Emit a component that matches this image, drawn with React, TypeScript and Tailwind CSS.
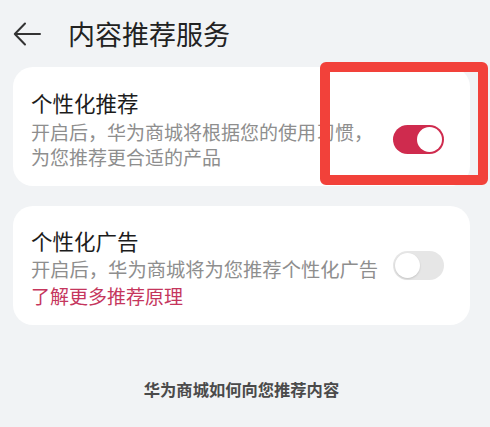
import React from "react";

const font = { fontFamily: '"Noto Sans CJK SC", "Noto Sans", sans-serif' };

function Toggle({ on }: { on: boolean }) {
  return on ? (
    <div className="w-[51px] h-[29px] rounded-full bg-[#cf2b4e] flex items-center justify-end pr-[2px] shrink-0">
      <div className="w-[25px] h-[25px] rounded-full bg-white" />
    </div>
  ) : (
    <div className="w-[51px] h-[29px] rounded-full bg-[#e6e6e6] flex items-center justify-start pl-[2px] shrink-0">
      <div className="w-[25px] h-[25px] rounded-full bg-white shadow-[0_1px_2px_rgba(0,0,0,0.15)]" />
    </div>
  );
}

export default function App() {
  return (
    <div
      className="relative w-[490px] h-[427px] bg-[#f1f3f5] px-[13px] overflow-hidden"
      style={font}
    >
      <div className="h-[67px] flex items-center">
        <svg width="28" height="24" viewBox="0 0 28 24">
          <path d="M12 1.5 L1.8 12 L12 22.5 M1.8 12 H27" fill="none" stroke="#333" strokeWidth="2" strokeLinecap="round" strokeLinejoin="round" />
        </svg>
        <div className="ml-[27px] text-[27px] leading-[34px] text-[#222]">内容推荐服务</div>
      </div>

      <div className="w-[457px] bg-white rounded-[20px] pl-[18px] pr-[26px] pt-[22px] pb-[17px] flex items-center">
        <div className="flex-1">
          <div className="text-[21.5px] leading-[28px] text-[#1c1c1c]">个性化推荐</div>
          <div className="mt-[2px] text-[19px] leading-[25px] text-[#8e8e8e] whitespace-nowrap">
            开启后，华为商城将根据您的使用习惯，
            <br />
            为您推荐更合适的产品
          </div>
        </div>
        <div className="mt-[20px]">
          <Toggle on={true} />
        </div>
      </div>

      <div className="mt-[20px] w-[457px] bg-white rounded-[20px] pl-[18px] pr-[26px] pt-[21px] pb-[16px] flex items-center">
        <div className="flex-1">
          <div className="text-[21.5px] leading-[28px] text-[#1c1c1c]">个性化广告</div>
          <div className="mt-[1px] text-[19.3px] leading-[26px] text-[#8e8e8e] whitespace-nowrap">
            开启后，华为商城将为您推荐个性化广告
          </div>
          <div className="mt-[1px] text-[19px] leading-[26px] text-[#c5365d]">了解更多推荐原理</div>
        </div>
        <div className="mt-[-5px]">
          <Toggle on={false} />
        </div>
      </div>

      <div className="mt-[53px] w-[457px] text-center text-[16.3px] leading-[22px] font-bold text-[#4a4a4a]">
        华为商城如何向您推荐内容
      </div>

      <div className="absolute left-[320px] top-[62px] w-[168px] h-[123px] border-[10px] border-[#f2413a] rounded-[6px]" />
    </div>
  );
}
